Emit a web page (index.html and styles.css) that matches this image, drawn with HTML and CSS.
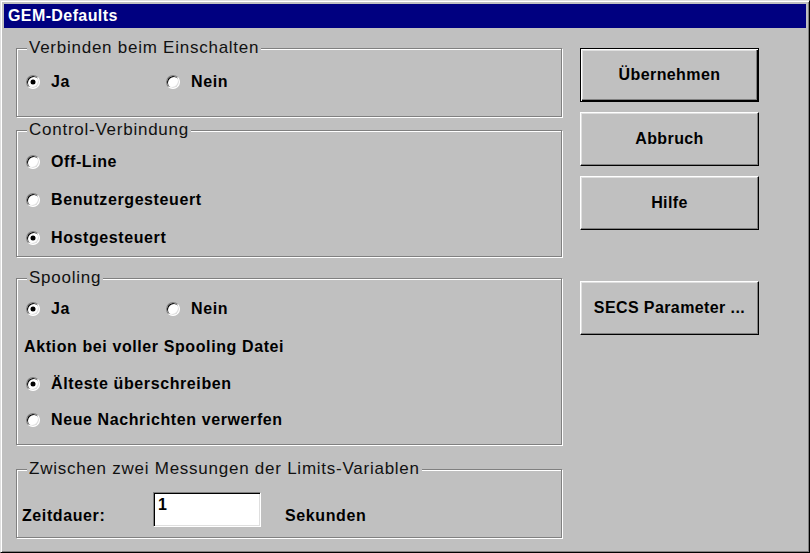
FILE: index.html
```html
<!DOCTYPE html>
<html lang="de">
<head>
  <meta charset="UTF-8">
  <title>GEM-Defaults</title>
  <link rel="stylesheet" href="styles.css">
</head>
<body>
<div class="window">
  <div class="caption">GEM-Defaults</div>
  <div class="client">
    <div class="groups">
      <div class="group g-connect">
        <span class="group-title">Verbinden beim Einschalten</span>
        <div class="row">
          <label class="opt wide"><span class="radio on"></span>Ja</label>
          <label class="opt"><span class="radio"></span>Nein</label>
        </div>
      </div>

      <div class="group g-control">
        <span class="group-title">Control-Verbindung</span>
        <div class="row"><label class="opt"><span class="radio"></span>Off-Line</label></div>
        <div class="row"><label class="opt"><span class="radio"></span>Benutzergesteuert</label></div>
        <div class="row"><label class="opt"><span class="radio on"></span>Hostgesteuert</label></div>
      </div>

      <div class="group g-spool">
        <span class="group-title">Spooling</span>
        <div class="row">
          <label class="opt wide"><span class="radio on"></span>Ja</label>
          <label class="opt"><span class="radio"></span>Nein</label>
        </div>
        <div class="row text">Aktion bei voller Spooling Datei</div>
        <div class="row compact"><label class="opt"><span class="radio on"></span>Älteste überschreiben</label></div>
        <div class="row compact"><label class="opt"><span class="radio"></span>Neue Nachrichten verwerfen</label></div>
      </div>

      <div class="group g-limits">
        <span class="group-title">Zwischen zwei Messungen der Limits-Variablen</span>
        <div class="field-row">
          <span class="field-label">Zeitdauer:</span>
          <div class="edit">1</div>
          <span class="unit">Sekunden</span>
        </div>
      </div>
    </div>

    <div class="buttons">
      <button class="btn default">Übernehmen</button>
      <button class="btn">Abbruch</button>
      <button class="btn">Hilfe</button>
      <button class="btn secs">SECS Parameter ...</button>
    </div>
  </div>
</div>
</body>
</html>
```

FILE: styles.css
```css
* { box-sizing: border-box; }
body { margin: 0; background: #c0c0c0; font-family: "Liberation Sans", Arial, sans-serif; color: #000; }

.window { width: 810px; height: 553px; padding: 3px; background: #c0c0c0;
  border: 1px solid; border-color: #dfdfdf #000 #000 #dfdfdf;
  box-shadow: inset 1px 1px #fff, inset -1px -1px #808080; }
.caption { height: 24px; background: #000080; color: #fff; font-weight: bold; font-size: 16px;
  letter-spacing: .4px; line-height: 24px; padding-left: 4px; }

.client { display: flex; gap: 18px; padding: 20px 0 0 12px; }
.groups { width: 546px; }

.group { position: relative; border: 1px solid #808080; padding: 0 0 0 7px;
  box-shadow: 1px 1px 0 #fff, inset 1px 1px 0 #fff; }
.group-title { position: absolute; top: -10px; left: 10px; padding: 0 2px; background: #c0c0c0;
  font-size: 17px; letter-spacing: .75px; line-height: 18px; color: #111; }
.g-connect { height: 69px; margin-bottom: 13px; padding-top: 14px; }
.g-control { height: 127px; margin-bottom: 21px; padding-top: 12px; }
.g-spool { height: 167px; margin-bottom: 24px; padding-top: 11px; }
.g-limits { height: 69px; padding-top: 22px; }

.row { height: 38px; display: flex; align-items: center; font-weight: bold; font-size: 16px; letter-spacing: .6px; }
.row.compact { height: 36px; }

.opt { display: flex; align-items: center; }
.opt.wide { width: 140px; }
.radio { position: relative; width: 14px; height: 14px; margin: 0 11px 0 2px; border-radius: 50%; background: #fff;
  border: 1px solid; border-color: #808080 #fff #fff #808080;
  box-shadow: inset 1px 1px #000, inset -1px -1px #dfdfdf; }
.radio.on::after { content: ""; position: absolute; left: 4px; top: 4px; width: 4px; height: 4px; border-radius: 50%; background: #000;
  box-shadow: 0 0 0 .5px #000; }

.field-row { display: flex; align-items: flex-start; font-weight: bold; font-size: 16px; letter-spacing: .6px; }
.field-label, .unit { line-height: 18px; padding-top: 15px; }
.field-label { width: 131px; margin-left: -2px; }
.edit { width: 108px; height: 35px; background: #fff; padding: 3px 4px; font-weight: bold;
  border: 1px solid; border-color: #808080 #fff #fff #808080;
  box-shadow: inset 1px 1px #000, inset -1px -1px #dfdfdf; }
.unit { margin-left: 24px; }

.buttons { display: flex; flex-direction: column; gap: 10px; }
.btn { width: 179px; height: 54px; background: #c0c0c0; font-family: inherit; font-size: 16px; font-weight: bold;
  letter-spacing: .4px; color: #000; padding: 0;
  border: 1px solid; border-color: #fff #000 #000 #fff;
  box-shadow: inset -1px -1px #808080, inset 1px 1px #dfdfdf; }
.btn.default { border-color: #000;
  box-shadow: inset 1px 1px #fff, inset -1px -1px #000, inset -2px -2px #808080, inset 2px 2px #dfdfdf; }
.btn.secs { margin-top: 41px; }
```
